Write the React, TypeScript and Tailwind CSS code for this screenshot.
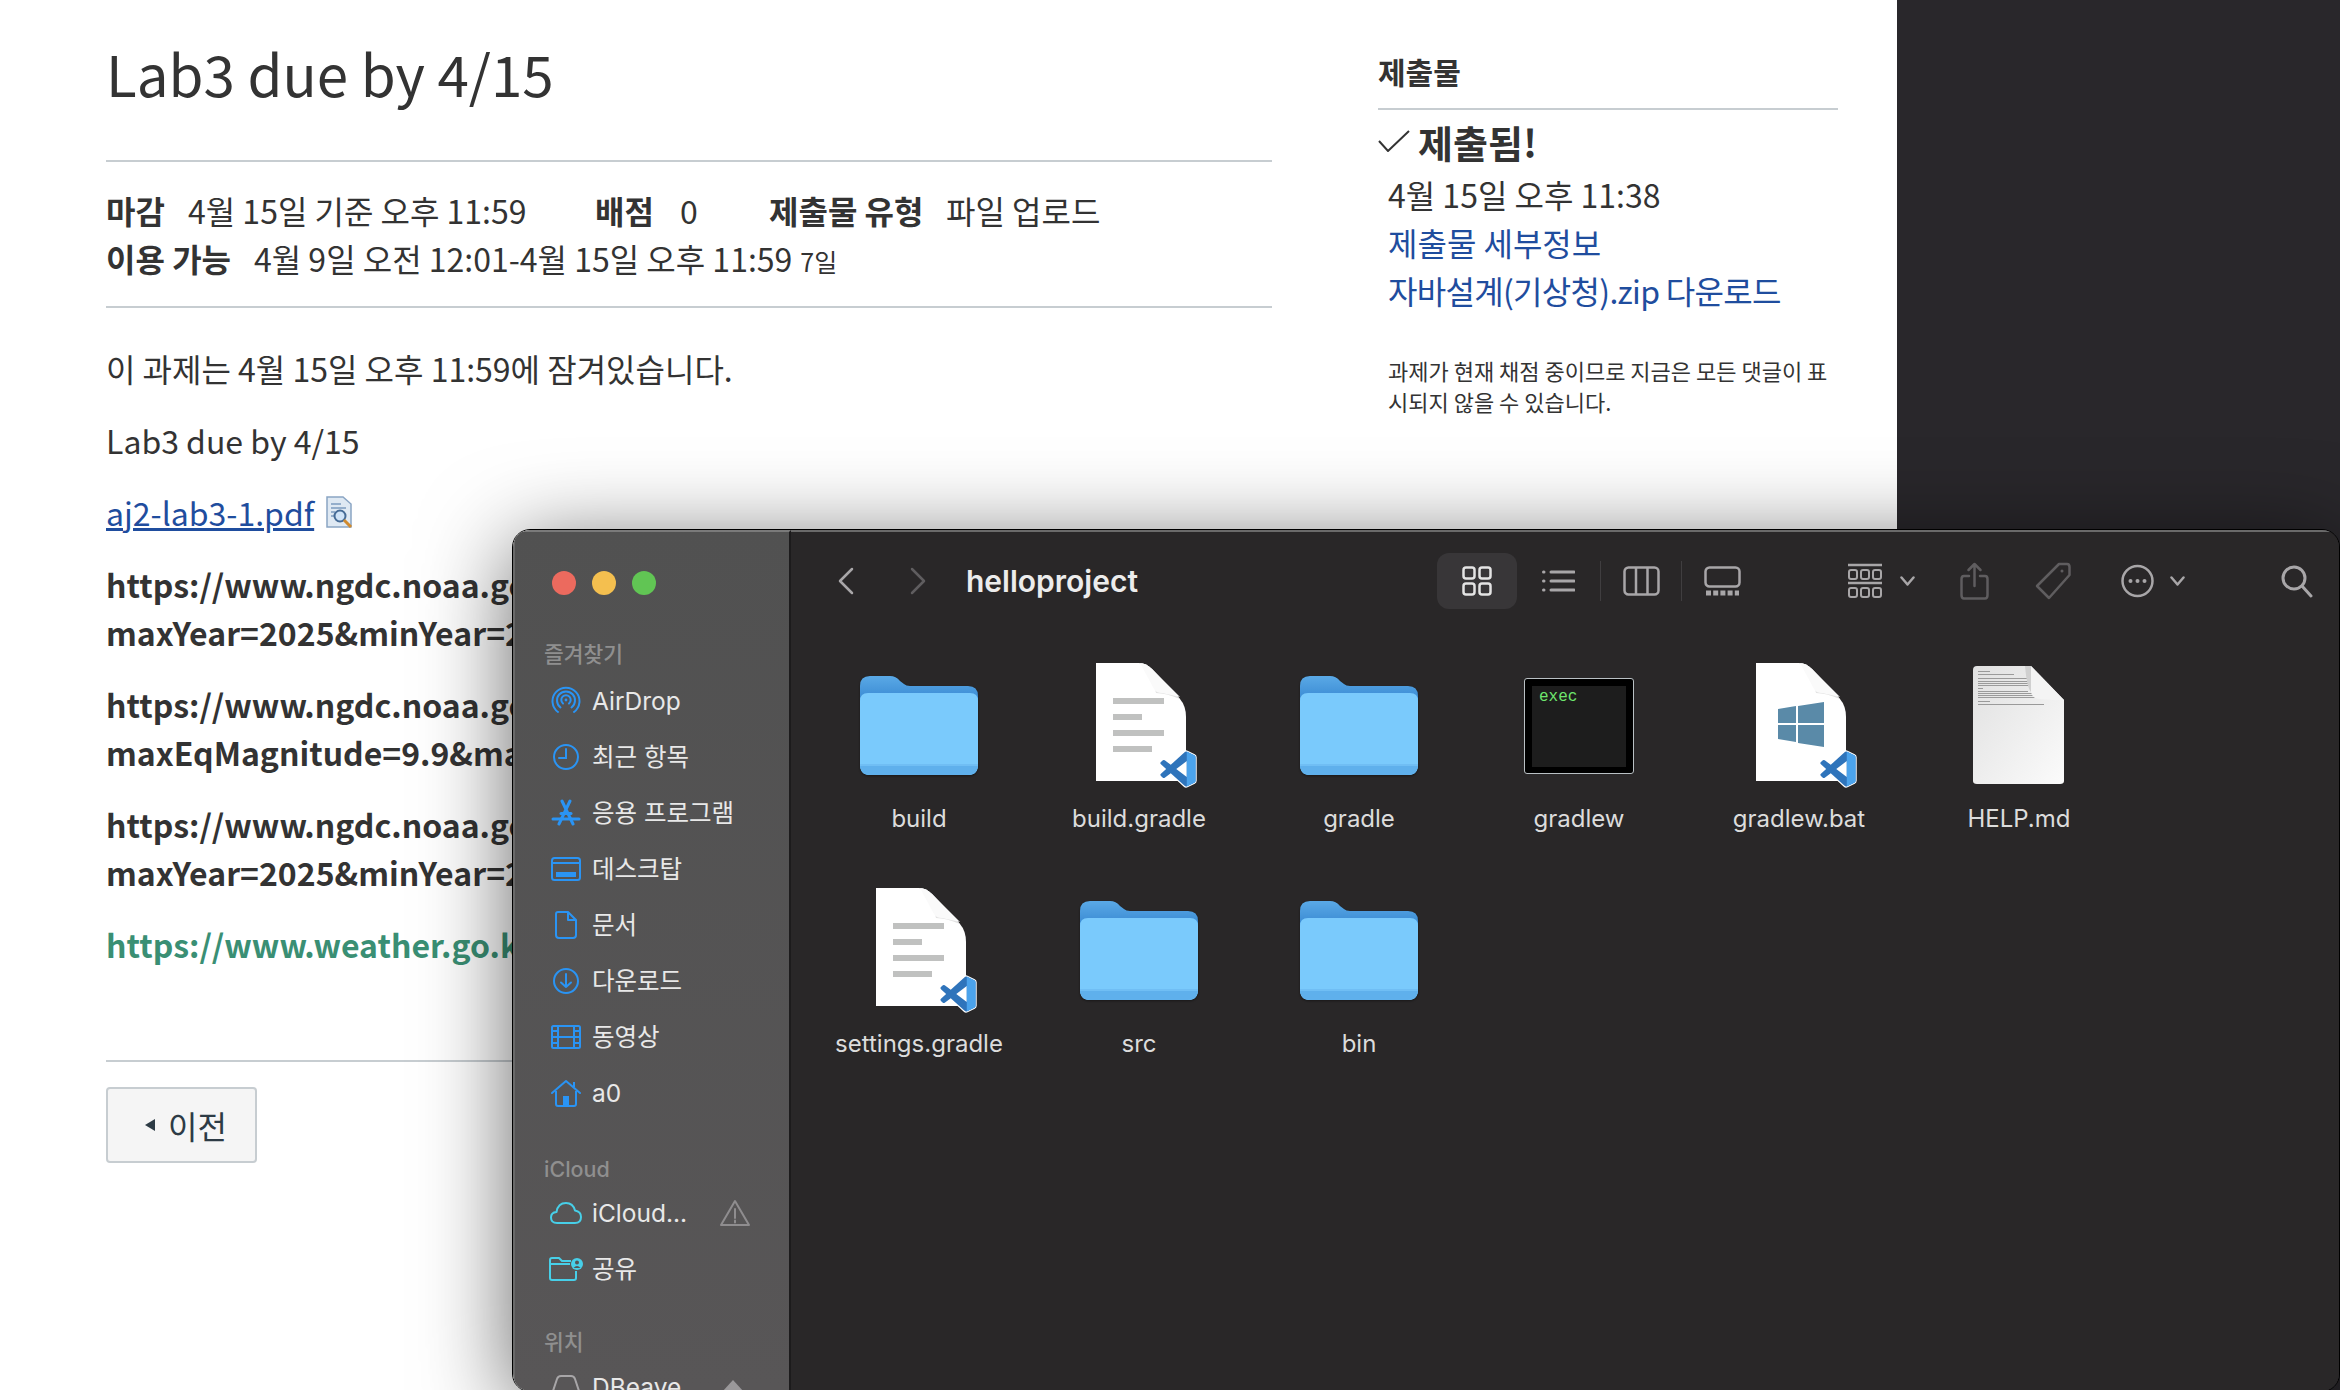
import React from 'react';

const Rule = () => <div className="h-[2px] bg-[#c7cdd1]" />;

const Folder = () => (
  <svg width="118" height="99" viewBox="0 0 118 99" className="drop-shadow-[0_1px_1px_rgba(0,0,0,0.4)]">
    <defs>
      <linearGradient id="folderBack" x1="0" y1="0" x2="0" y2="1">
        <stop offset="0" stopColor="#5aa9e6" />
        <stop offset="0.2" stopColor="#3f8fd6" />
      </linearGradient>
    </defs>
    <path d="M0 10Q0 0 10 0H30Q36 0 40 5L44 8Q46 10 50 10H108Q118 10 118 20V88Q118 99 108 99H10Q0 99 0 88Z" fill="url(#folderBack)" />
    <path d="M0 25Q0 17 8 17H110Q118 17 118 25V88Q118 99 108 99H10Q0 99 0 88Z" fill="#7acafc" />
    <path d="M0 88H118Q118 99 108 99H10Q0 99 0 88Z" fill="#5fb0ec" />
    <rect x="0" y="88" width="118" height="2" fill="#70bef4" />
  </svg>
);

const VsBadge = () => (
  <svg width="38" height="38" viewBox="-1 -1 26 26" className="absolute right-0 bottom-0">
    <path
      d="M23.15 2.587L18.21.21a1.494 1.494 0 0 0-1.705.29l-9.46 8.63-4.12-3.128a.999.999 0 0 0-1.276.057L.327 7.261A1 1 0 0 0 .326 8.74L3.899 12 .326 15.26a1 1 0 0 0 .001 1.479L1.65 17.94a.999.999 0 0 0 1.276.057l4.12-3.128 9.46 8.63a1.492 1.492 0 0 0 1.704.29l4.942-2.377A1.5 1.5 0 0 0 24 20.06V3.939a1.5 1.5 0 0 0-.85-1.352zm-5.146 14.861L10.826 12l7.178-5.448v10.896z"
      fill="#2f74bb"
      stroke="#fff"
      strokeWidth="1.600"
      strokeLinejoin="round"
      paintOrder="stroke"
    />
    <path d="M18 .1L23.15 2.587A1.500 1.500 0 0 1 24 3.939V20.060A1.500 1.500 0 0 1 23.150 21.410L18 23.900Z" fill="#4ba3ec" />
  </svg>
);

const PagePath = 'M0 0H43Q50 0 56 6L84 36Q90 43 90 54V118H0Z';

const CodeDoc = () => (
  <div className="relative w-[101px] h-[125px] ml-[14px]">
    <svg width="90" height="118" viewBox="0 0 90 118" className="absolute left-0 top-0">
      <path d={PagePath} fill="#fff" />
      <path d="M43 0Q50 0 56 6L84 36Q70 30 60 30Q58 20 50 2Z" fill="#e2e2e2" />
      <path d="M44 0L58 26Q60 30 66 30L84 34L56 6Q50 0 44 0Z" fill="#fafafa" />
      <rect x="17" y="35" width="51" height="6" fill="#c0c1c0" />
      <rect x="17" y="51" width="29" height="6" fill="#c0c1c0" />
      <rect x="17" y="67" width="51" height="6" fill="#c0c1c0" />
      <rect x="17" y="83" width="39" height="6" fill="#c0c1c0" />
    </svg>
    <VsBadge />
  </div>
);

const BatDoc = () => (
  <div className="relative w-[101px] h-[125px] ml-[14px]">
    <svg width="90" height="118" viewBox="0 0 90 118" className="absolute left-0 top-0">
      <path d={PagePath} fill="#fff" />
      <path d="M43 0Q50 0 56 6L84 36Q70 30 60 30Q58 20 50 2Z" fill="#e2e2e2" />
      <path d="M44 0L58 26Q60 30 66 30L84 34L56 6Q50 0 44 0Z" fill="#fafafa" />
      <path d="M22 46L40 43V60H22ZM42 43L68 39V60H42ZM22 62H40V79L22 76ZM42 62H68V84L42 80Z" fill="#5a8aa8" />
    </svg>
    <VsBadge />
  </div>
);

const HelpDoc = () => (
  <svg width="92" height="120" viewBox="0 0 92 120">
    <defs>
      <linearGradient id="helpPage" x1="0" y1="0" x2="1" y2="1">
        <stop offset="0" stopColor="#e0e0e0" />
        <stop offset="1" stopColor="#fbfbfb" />
      </linearGradient>
    </defs>
    <path d="M4 0H58L91 34V115Q91 118 87 118H4Q0 118 0 115V4Q0 0 4 0Z" fill="url(#helpPage)" />
    <g fill="#9a9a9a">
      <rect x="5" y="5" width="12" height="1" />
      <rect x="5" y="8" width="36" height="1" />
      <rect x="5" y="12" width="52" height="1" />
      <rect x="5" y="15" width="58" height="1" />
      <rect x="5" y="17" width="60" height="1" />
      <rect x="5" y="19" width="60" height="1" />
      <rect x="5" y="22" width="5" height="1" />
      <rect x="5" y="25" width="50" height="1" />
      <rect x="5" y="27" width="60" height="1" />
      <rect x="5" y="29" width="58" height="1" />
      <rect x="5" y="31" width="60" height="1" />
      <rect x="5" y="35" width="12" height="1" />
      <rect x="5" y="38" width="66" height="1" />
    </g>
    <path d="M58 0L91 34Q70 34 62 32Q58 30 58 24Z" fill="#f4f4f4" />
    <path d="M58 0V26Q54 22 52 0Z" fill="#d0d0d0" />
  </svg>
);

const Terminal = () => (
  <div className="w-[110px] h-[96px] bg-black rounded-[3px] border border-[#b9c0c4] pt-[7px] px-[7px] pb-[6px]">
    <div className="h-full bg-[#1d1d1d] px-[7px] pt-[1px] text-[16px] leading-[20px] text-[#6ee66e] font-['Liberation_Mono',monospace]">
      exec
    </div>
  </div>
);

const files: { name: string; icon: React.ReactNode }[] = [
  { name: 'build', icon: <Folder /> },
  { name: 'build.gradle', icon: <CodeDoc /> },
  { name: 'gradle', icon: <Folder /> },
  { name: 'gradlew', icon: <Terminal /> },
  { name: 'gradlew.bat', icon: <BatDoc /> },
  { name: 'HELP.md', icon: <HelpDoc /> },
  { name: 'settings.gradle', icon: <CodeDoc /> },
  { name: 'src', icon: <Folder /> },
  { name: 'bin', icon: <Folder /> },
];

const blue = '#2a94f4';
const cyan = '#47cfe8';

const sideIcons: Record<string, React.ReactNode> = {
  airdrop: (
    <svg width="30" height="30" viewBox="0 0 30 30" fill="none" stroke={blue} strokeWidth="2" strokeLinecap="round">
      <path d="M7 26A13.500 13.500 0 1 1 23 26" />
      <path d="M9.500 21.500A9 9 0 1 1 20.500 21.500" />
      <path d="M12 17.500A4.700 4.700 0 1 1 18 17.500" />
      <circle cx="15" cy="14" r="1.400" fill={blue} stroke="none" />
    </svg>
  ),
  clock: (
    <svg width="30" height="30" viewBox="0 0 30 30" fill="none" stroke={blue} strokeWidth="2" strokeLinecap="round">
      <circle cx="15" cy="15" r="12" />
      <path d="M15 7V16H8" />
    </svg>
  ),
  apps: (
    <svg width="30" height="28" viewBox="0 0 30 28" fill="none" stroke={blue} strokeLinecap="round">
      <path d="M11 2L22 25M19 2L8 25" strokeWidth="3" />
      <path d="M2 20H28" strokeWidth="3" />
      <path d="M10 14.500H20" strokeWidth="3" />
    </svg>
  ),
  desktop: (
    <svg width="30" height="24" viewBox="0 0 30 24" fill="none" stroke={blue} strokeWidth="2">
      <rect x="1" y="1" width="28" height="22" rx="2.500" />
      <path d="M1 6H29" />
      <rect x="6" y="16" width="18" height="3" fill={blue} />
    </svg>
  ),
  doc: (
    <svg width="22" height="28" viewBox="0 0 22 28" fill="none" stroke={blue} strokeWidth="2" strokeLinejoin="round">
      <path d="M3 1H13L21 9V24Q21 27 18 27H4Q1 27 1 24V3Q1 1 3 1Z" />
      <path d="M13 1V9H21" />
    </svg>
  ),
  download: (
    <svg width="30" height="30" viewBox="0 0 30 30" fill="none" stroke={blue} strokeWidth="2" strokeLinecap="round" strokeLinejoin="round">
      <circle cx="15" cy="15" r="12" />
      <path d="M15 8V21M10 16.500L15 21L20 16.500" />
    </svg>
  ),
  film: (
    <svg width="30" height="24" viewBox="0 0 30 24" fill="none" stroke={blue} strokeWidth="2">
      <rect x="1" y="1" width="28" height="22" rx="1.500" />
      <path d="M7 1V23M23 1V23M7 12H23M1 6H7M1 12H7M1 18H7M23 6H29M23 12H29M23 18H29" />
    </svg>
  ),
  home: (
    <svg width="30" height="28" viewBox="0 0 30 28" fill="none" stroke={blue} strokeWidth="2" strokeLinejoin="round">
      <path d="M1 14L15 2L29 14" strokeLinecap="round" />
      <path d="M23 8V3" />
      <path d="M5 12V25Q5 27 7 27H23Q25 27 25 25V12" />
      <rect x="12" y="17" width="6" height="10" fill={blue} stroke="none" />
    </svg>
  ),
  cloud: (
    <svg width="32" height="22" viewBox="0 0 32 22" fill="none" stroke={cyan} strokeWidth="2" strokeLinejoin="round">
      <path d="M7 21Q1 21 1 15.500Q1 10.500 6.500 10Q8 1 16 1Q23 1 25 8.500Q31 9.500 31 15Q31 21 25 21Z" />
    </svg>
  ),
  shared: (
    <svg width="34" height="24" viewBox="0 0 34 24" fill="none" stroke={cyan} strokeWidth="2" strokeLinejoin="round">
      <path d="M1 3Q1 1 3 1H10L13 4H22M1 7H21M1 3V21Q1 23 3 23H25Q27 23 27 21V14" />
      <circle cx="28" cy="7" r="6" fill={cyan} stroke="none" />
      <circle cx="28" cy="5.500" r="2" fill="#555354" stroke="none" />
      <path d="M24.500 11Q28 7 31.500 11Z" fill="#555354" stroke="none" />
    </svg>
  ),
};

const favorites = [
  ['airdrop', 'AirDrop'],
  ['clock', '최근 항목'],
  ['apps', '응용 프로그램'],
  ['desktop', '데스크탑'],
  ['doc', '문서'],
  ['download', '다운로드'],
  ['film', '동영상'],
  ['home', 'a0'],
];

const SideRow = ({ icon, label, right }: { icon: string; label: string; right?: React.ReactNode }) => (
  <div className="h-14 flex items-center text-[24.5px] text-[#e8e8e8]">
    <div className="w-[49px] h-8 flex items-center justify-center pr-[4px]">{sideIcons[icon]}</div>
    <span>{label}</span>
    {right}
  </div>
);

const SideLabel = ({ children }: { children: React.ReactNode }) => (
  <div className="h-8 flex items-center text-[21.5px] font-medium text-[#8f8f8f] pl-[1px]">{children}</div>
);

const gray = '#a8a6a8';
const dim = '#5f5d5f';

const Chevron = ({ color = gray }: { color?: string }) => (
  <svg width="15" height="10" viewBox="0 0 15 10" fill="none" stroke={color} strokeWidth="2.500" strokeLinecap="round" strokeLinejoin="round" className="shrink-0">
    <path d="M1.500 1.500L7.500 8.500L13.500 1.500" />
  </svg>
);

export default function App() {
  return (
    <div className="relative w-[2340px] h-[1390px] overflow-hidden bg-[#29272b]">
      <div className="w-[1897px] h-full bg-white flex text-[#333333] font-['Noto_Sans_CJK_KR',sans-serif]">
        {/* assignment body */}
        <div className="w-[1166px] ml-[106px] shrink-0">
          <h1 className="text-[56.500px] leading-[76px] font-normal mt-[34px] mb-[50px]">Lab3 due by 4/15</h1>
          <Rule />
          <div className="pt-[24px] pb-[21px] text-[32px] leading-[48px] font-normal whitespace-nowrap">
            <div className="flex">
              <b className="font-bold w-[82px]">마감</b>
              <span className="w-[407px]">4월 15일 기준 오후 11:59</span>
              <b className="font-bold w-[85px]">배점</b>
              <span className="w-[89px]">0</span>
              <b className="font-bold w-[177px]">제출물 유형</b>
              <span>파일 업로드</span>
            </div>
            <div className="flex items-baseline">
              <b className="font-bold w-[148px]">이용 가능</b>
              <span>4월 9일 오전 12:01-4월 15일 오후 11:59</span>
              <span className="text-[25px] ml-[8px]">7일</span>
            </div>
          </div>
          <Rule />
          <div className="text-[32px] leading-[48px] font-normal pt-[36px]">
            <p>이 과제는 4월 15일 오후 11:59에 잠겨있습니다.</p>
            <p className="mt-6">Lab3 due by 4/15</p>
            <p className="mt-6 flex items-center">
              <span className="text-[#1f4d9e] underline">aj2-lab3-1.pdf</span>
              <svg width="28" height="32" viewBox="0 0 28 32" className="ml-[12px]">
                <path d="M1 1H17L25 8V31H1Z" fill="#dfe9f3" stroke="#8aa5c4" strokeWidth="1.500" />
                <path d="M5 8H15M5 12H20M5 16H9M5 20H8" stroke="#7d9cc0" strokeWidth="1.500" />
                <circle cx="14" cy="20" r="5.500" fill="#cfe3f7" stroke="#456b96" strokeWidth="2" />
                <path d="M18 24L25 31" stroke="#d08a2e" strokeWidth="3" />
              </svg>
            </p>
            <div className="font-bold whitespace-nowrap">
              <p className="mt-6">https://www.ngdc.noaa.gov<br />maxYear=2025&amp;minYear=2</p>
              <p className="mt-6">https://www.ngdc.noaa.gov<br />maxEqMagnitude=9.9&amp;max</p>
              <p className="mt-6">https://www.ngdc.noaa.gov<br />maxYear=2025&amp;minYear=2</p>
              <p className="mt-6 text-[#3a8f74]">https://www.weather.go.kr</p>
            </div>
          </div>
          <div className="mt-[92px]"><Rule /></div>
          <button className="mt-[25px] w-[151px] h-[76px] flex items-center justify-center pl-[8px] bg-[#f5f5f5] border-2 border-[#c7cdd1] rounded-[4px] text-[32px] font-normal text-[#2d3b45]">
            <svg width="12" height="14" viewBox="0 0 12 14" className="mr-[12px]"><path d="M11 1V13L1 7Z" fill="#2d3b45" /></svg>
            이전
          </button>
        </div>
        {/* submission sidebar */}
        <div className="ml-[106px] w-[460px] shrink-0">
          <div className="mt-[52px] h-[38px] flex items-center text-[30px] font-bold">제출물</div>
          <div className="mt-[18px]"><Rule /></div>
          <div className="mt-[9px] flex items-center h-[44px]">
            <svg width="32" height="22" viewBox="0 0 32 22" fill="none" stroke="#333333" strokeWidth="2"><path d="M1 11L10 21L31 1" /></svg>
            <span className="ml-[8px] text-[38px] font-bold">제출됨!</span>
          </div>
          <div className="pl-[10px] text-[32px] leading-[48px] font-normal mt-[7px]">
            <div>4월 15일 오후 11:38</div>
            <div className="text-[#1f4d9e]">제출물 세부정보</div>
            <div className="text-[#1f4d9e] tracking-[-0.7px]">자바설계(기상청).zip 다운로드</div>
            <p className="mt-[41px] text-[22px] leading-[31px] font-normal">과제가 현재 채점 중이므로 지금은 모든 댓글이 표시되지 않을 수 있습니다.</p>
          </div>
        </div>
      </div>

      {/* finder window */}
      <div className="absolute left-[512px] top-[529px] w-[1828px] h-[863px] flex rounded-[18px] overflow-hidden border border-black shadow-[0_16px_90px_rgba(0,0,0,0.6)] font-['Inter','Noto_Sans_CJK_KR',sans-serif]">
        <div className="w-[278px] shrink-0 border-t-2 border-l-2 border-[#7a7a7a] border-l-[#6a6a6a] border-r-2 border-r-[#1c1b1c] bg-gradient-to-b from-[#515151] to-[#585657] pl-[28px]">
          <div className="flex gap-4 pt-[39px] pl-[9px]">
            <div className="w-6 h-6 rounded-full bg-[#ec6a5e]" />
            <div className="w-6 h-6 rounded-full bg-[#f4bf4f]" />
            <div className="w-6 h-6 rounded-full bg-[#61c554]" />
          </div>
          <div className="mt-[43px]"><SideLabel>즐겨찾기</SideLabel></div>
          <div className="mt-[3px]">
            {favorites.map(([icon, label]) => <SideRow key={label} icon={icon} label={label} />)}
          </div>
          <div className="mt-[32px]"><SideLabel>iCloud</SideLabel></div>
          <div>
            <SideRow
              icon="cloud"
              label="iCloud..."
              right={
                <svg width="30" height="28" viewBox="0 0 30 28" fill="none" stroke="#8f8d8f" strokeWidth="2" strokeLinejoin="round" className="ml-[33px]">
                  <path d="M15 2L29 26H1Z" />
                  <path d="M15 10V19M15 21.500V23.500" strokeLinecap="round" />
                </svg>
              }
            />
            <SideRow icon="shared" label="공유" />
          </div>
          <div className="mt-[29px]"><SideLabel>위치</SideLabel></div>
          <div className="mt-[1px]">
            <div className="h-14 flex items-center text-[24.500px] text-[#e8e8e8]">
              <div className="w-[49px] h-8 flex items-center justify-center pr-[4px]">
                <svg width="30" height="24" viewBox="0 0 30 24" fill="none" stroke="#a8a6a8" strokeWidth="2"><path d="M6 4Q7 1 10 1H20Q23 1 24 4L28 16V22H2V16Z" /></svg>
              </div>
              <span>DBeave</span>
              <svg width="22" height="14" viewBox="0 0 22 14" className="ml-[41px]"><path d="M11 0L22 12H0Z" fill="#9a989a" /></svg>
            </div>
          </div>
        </div>
        <div className="flex-1 bg-[#292728] border-t-2 border-[#6a6a6a] overflow-hidden">
          {/* toolbar */}
          <div className="flex items-center h-[80px] pt-[18px] pl-[46px] whitespace-nowrap">
            <svg width="17" height="28" viewBox="0 0 17 28" fill="none" stroke={gray} strokeWidth="2.500" strokeLinecap="round" strokeLinejoin="round" className="shrink-0"><path d="M15 2L3 14L15 26" /></svg>
            <svg width="17" height="28" viewBox="0 0 17 28" fill="none" stroke={dim} strokeWidth="2.500" strokeLinecap="round" strokeLinejoin="round" className="ml-[56px] shrink-0"><path d="M2 2L14 14L2 26" /></svg>
            <div className="ml-[39px] w-[471px] text-[30px] font-semibold text-[#ececec]">helloproject</div>
            <div className="w-[80px] h-[56px] rounded-[12px] bg-[#383638] flex items-center justify-center shrink-0">
              <svg width="30" height="30" viewBox="0 0 30 30" fill="none" stroke="#e4e4e4" strokeWidth="2.500">
                <rect x="1.500" y="1.500" width="11" height="11" rx="2.500" />
                <rect x="17.500" y="1.500" width="11" height="11" rx="2.500" />
                <rect x="1.500" y="17.500" width="11" height="11" rx="2.500" />
                <rect x="17.500" y="17.500" width="11" height="11" rx="2.500" />
              </svg>
            </div>
            <svg width="33" height="24" viewBox="0 0 33 24" fill="none" stroke={gray} strokeWidth="3" strokeLinecap="round" className="ml-[25px] shrink-0">
              <path d="M9 3H32M9 12H32M9 21H32M1.500 3H2M1.500 12H2M1.500 21H2" />
            </svg>
            <div className="ml-[25px] w-[1px] h-10 bg-[#403e40] shrink-0" />
            <svg width="37" height="30" viewBox="0 0 37 30" fill="none" stroke={gray} strokeWidth="2.500" className="ml-[22px] shrink-0">
              <rect x="1.500" y="1.500" width="34" height="27" rx="4" />
              <path d="M13 1.500V28.500M24.500 1.500V28.500" />
            </svg>
            <div className="ml-[21px] w-[1px] h-10 bg-[#403e40] shrink-0" />
            <svg width="37" height="30" viewBox="0 0 37 30" fill="none" stroke={gray} strokeWidth="2.500" className="ml-[22px] shrink-0">
              <rect x="1.500" y="1.500" width="34" height="19" rx="4" />
              <path d="M2 27H35" strokeWidth="5" strokeDasharray="5 2.200" />
            </svg>
            <svg width="34" height="36" viewBox="0 0 34 36" fill="none" stroke={gray} strokeWidth="2" className="ml-[107px] shrink-0">
              <path d="M0 2H34M0 20H34" strokeWidth="2.500" />
              <rect x="1" y="7" width="8" height="9" rx="2" />
              <rect x="13" y="7" width="8" height="9" rx="2" />
              <rect x="25" y="7" width="8" height="9" rx="2" />
              <rect x="1" y="25" width="8" height="9" rx="2" />
              <rect x="13" y="25" width="8" height="9" rx="2" />
              <rect x="25" y="25" width="8" height="9" rx="2" />
            </svg>
            <div className="ml-[18px]"><Chevron /></div>
            <svg width="29" height="38" viewBox="0 0 29 38" fill="none" stroke={dim} strokeWidth="2.500" strokeLinecap="round" strokeLinejoin="round" className="ml-[45px] shrink-0">
              <path d="M9 14H4Q1.500 14 1.500 17V33Q1.500 36.500 4 36.500H25Q27.500 36.500 27.500 33V17Q27.500 14 25 14H20" />
              <path d="M14.500 24V2M8.500 8L14.500 2L20.500 8" />
            </svg>
            <svg width="36" height="38" viewBox="0 0 36 38" fill="none" stroke={dim} strokeWidth="2.500" strokeLinejoin="round" className="ml-[46px] shrink-0">
              <path d="M24 2H32Q34.500 2 34.500 5V13L14 36L2 24Z" />
              <circle cx="27" cy="9" r="1.500" fill={dim} stroke="none" />
            </svg>
            <svg width="33" height="34" viewBox="0 0 33 34" fill="none" stroke={gray} strokeWidth="2.500" className="ml-[50px] shrink-0">
              <circle cx="16.500" cy="17" r="15" />
              <circle cx="9.500" cy="17" r="2" fill={gray} stroke="none" />
              <circle cx="16.500" cy="17" r="2" fill={gray} stroke="none" />
              <circle cx="23.500" cy="17" r="2" fill={gray} stroke="none" />
            </svg>
            <div className="ml-[16px]"><Chevron /></div>
            <svg width="32" height="33" viewBox="0 0 32 33" fill="none" stroke={gray} strokeWidth="3" strokeLinecap="round" className="ml-[96px] shrink-0">
              <circle cx="13" cy="13" r="11" />
              <path d="M21 21L30 31" />
            </svg>
          </div>
          {/* files */}
          <div className="grid grid-cols-[repeat(6,220px)] auto-rows-[225px] ml-[18px] mt-[51px]">
            {files.map((f) => (
              <div key={f.name} className="flex flex-col items-center">
                <div className="h-[125px] w-full flex items-center justify-center">
                  {f.icon}
                </div>
                <div className="mt-[15px] text-[24px] leading-[32px] text-[#dcdcdc]">{f.name}</div>
              </div>
            ))}
          </div>
        </div>
      </div>
    </div>
  );
}
